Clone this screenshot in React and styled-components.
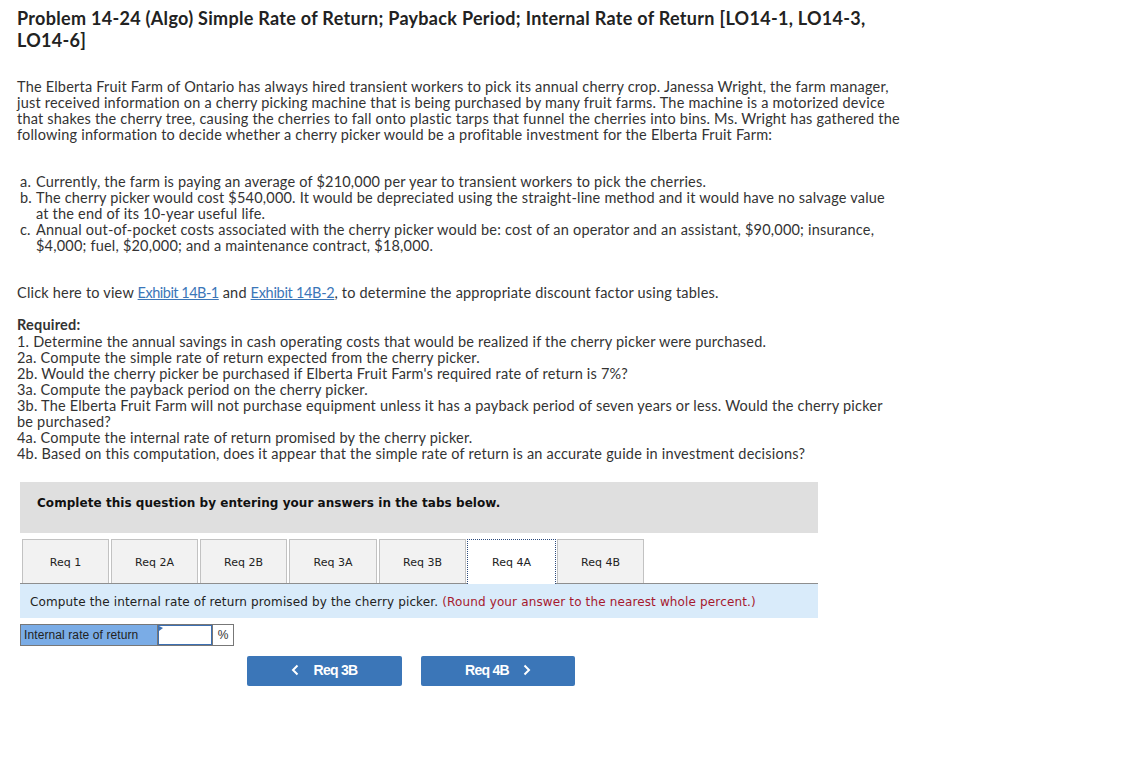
import React from "react";
import styled, { createGlobalStyle } from "styled-components";

const Global = createGlobalStyle`
	html, body {
		margin: 0;
		padding: 0;
		background: #ffffff;
	}
`;

const Page = styled.div`
	width: 1122px;
	height: 769px;
	overflow: hidden;
	box-sizing: border-box;
	padding: 7px 0 0 17px;
	font-family: "Lato", "Liberation Sans", sans-serif;
	font-size: 14.5px;
	letter-spacing: 0.2px;
	line-height: 16px;
	color: #333333;
	white-space: nowrap;
`;

const Title = styled.h1`
	margin: 0 0 28px;
	font-size: 18px;
	letter-spacing: 0.3px;
	line-height: 22px;
	font-weight: 700;
	color: #222222;
`;

const Para = styled.p`
	margin: 0 0 31px;
`;

const Parts = styled.ol`
	list-style: none;
	margin: 0 0 31px 3px;
	padding: 0;
`;

const Part = styled.li`
	position: relative;
	padding-left: 16px;
`;

const Marker = styled.span`
	position: absolute;
	left: 0;
`;

const Exhibit = styled.a`
	color: #3b76b8;
	letter-spacing: ${(p) => p.$spacing}px;
	text-decoration: underline;
`;

const ReqTitle = styled.div`
	font-weight: 700;
	margin: 16px 0 1px;
`;

const Question = styled.section`
	margin: 20px 0 0 3px;
	width: 798px;
	font-family: "DejaVu Sans", Verdana, sans-serif;
	letter-spacing: 0;
`;

const Banner = styled.div`
	height: 51px;
	box-sizing: border-box;
	padding: 13px 17px;
	background: #dfdfdf;
	font-size: 12px;
	letter-spacing: 0.05px;
	font-weight: 700;
	color: #111111;
`;

const Tabs = styled.div`
	display: flex;
	gap: 2px;
	margin-top: 6px;
	padding-left: 2px;
	border-bottom: 1px solid #8e8e8e;
`;

const Tab = styled.button`
	width: ${(p) => p.$w}px;
	height: 44px;
	box-sizing: border-box;
	padding: 2px 0 0;
	border: 1px solid #c2c2c2;
	border-bottom: none;
	background: #f2f2f2;
	font-family: inherit;
	font-size: 11px;
	color: #222222;
	${(p) =>
		p.$active &&
		"margin: 0 -1px -1px; height: 45px; padding: 0 0 0; background: #ffffff; border: 1px dotted #2c4a7c; border-bottom: none;"}
`;

const Instruction = styled.div`
	height: 34px;
	box-sizing: border-box;
	padding: 10px 10px;
	background: #d9ebfa;
	font-size: 12px;
	letter-spacing: 0.14px;
	color: #222222;
`;

const Note = styled.span`
	color: #a6192e;
`;

const AnswerRow = styled.div`
	display: flex;
	width: 214px;
	height: 22px;
	margin-top: 6px;
	box-sizing: border-box;
	border: 1px solid #777777;
	font-family: "Liberation Sans", Arial, sans-serif;
	font-size: 12px;
	line-height: 20px;
`;

const AnswerLabel = styled.div`
	width: 137px;
	padding-left: 3px;
	box-sizing: border-box;
	border-right: 1px solid #777777;
	background: #7aace6;
	color: #222222;
	letter-spacing: 0.1px;
`;

const AnswerInput = styled.div`
	position: relative;
	width: 54px;
	box-sizing: border-box;
	border: 1px solid #3d70b2;
	background: #ffffff;
	&::before {
		content: "";
		position: absolute;
		left: 0;
		top: 0;
		border-left: 4px solid #3d70b2;
		border-top: 2px solid transparent;
		border-bottom: 3px solid transparent;
	}
`;

const Unit = styled.div`
	flex: 1;
	text-align: center;
	border-left: 1px solid #777777;
`;

const Nav = styled.div`
	display: flex;
	gap: 19px;
	margin: 10px 0 0 227px;
`;

const NavButton = styled.button`
	display: flex;
	align-items: center;
	justify-content: center;
	gap: 14px;
	width: ${(p) => p.$w}px;
	height: 30px;
	padding: 0 0 2px;
	border: none;
	border-radius: 2px;
	background: #3b76b8;
	color: #ffffff;
	font-family: "Liberation Sans", Arial, sans-serif;
	font-size: 14px;
	letter-spacing: -0.7px;
	font-weight: 700;
`;

const Chevron = ({ flip }) => (
	<svg width="8" height="12" viewBox="0 0 8 12" fill="none" stroke="#ffffff" strokeWidth="2">
		<path d={flip ? "M6.5 1.5 2 6l4.5 4.5" : "M1.5 1.5 6 6l-4.5 4.5"} />
	</svg>
);

const tabs = [
	["Req 1", 87],
	["Req 2A", 87],
	["Req 2B", 87],
	["Req 3A", 88],
	["Req 3B", 87],
	["Req 4A", 89],
	["Req 4B", 87]
];

export default function App() {
	return (
		<Page>
			<Global />
			<Title>
				Problem 14-24 (Algo) Simple Rate of Return; Payback Period; Internal Rate of Return [LO14-1, LO14-3,
				<br />
				LO14-6]
			</Title>
			<Para>
				The Elberta Fruit Farm of Ontario has always hired transient workers to pick its annual cherry crop. Janessa Wright, the farm manager,
				<br />
				just received information on a cherry picking machine that is being purchased by many fruit farms. The machine is a motorized device
				<br />
				that shakes the cherry tree, causing the cherries to fall onto plastic tarps that funnel the cherries into bins. Ms. Wright has gathered the
				<br />
				following information to decide whether a cherry picker would be a profitable investment for the Elberta Fruit Farm:
			</Para>
			<Parts>
				<Part>
					<Marker>a.</Marker>
					Currently, the farm is paying an average of $210,000 per year to transient workers to pick the cherries.
				</Part>
				<Part>
					<Marker>b.</Marker>
					The cherry picker would cost $540,000. It would be depreciated using the straight-line method and it would have no salvage value
					<br />
					at the end of its 10-year useful life.
				</Part>
				<Part>
					<Marker>c.</Marker>
					Annual out-of-pocket costs associated with the cherry picker would be: cost of an operator and an assistant, $90,000; insurance,
					<br />
					$4,000; fuel, $20,000; and a maintenance contract, $18,000.
				</Part>
			</Parts>
			<div>
				Click here to view <Exhibit $spacing={-0.5}>Exhibit 14B-1</Exhibit> and <Exhibit $spacing={-0.3}>Exhibit 14B-2</Exhibit>, to determine the appropriate discount factor using tables.
			</div>
			<ReqTitle>Required:</ReqTitle>
			<div>
				1. Determine the annual savings in cash operating costs that would be realized if the cherry picker were purchased.
				<br />
				2a. Compute the simple rate of return expected from the cherry picker.
				<br />
				2b. Would the cherry picker be purchased if Elberta Fruit Farm's required rate of return is 7%?
				<br />
				3a. Compute the payback period on the cherry picker.
				<br />
				3b. The Elberta Fruit Farm will not purchase equipment unless it has a payback period of seven years or less. Would the cherry picker
				<br />
				be purchased?
				<br />
				4a. Compute the internal rate of return promised by the cherry picker.
				<br />
				4b. Based on this computation, does it appear that the simple rate of return is an accurate guide in investment decisions?
			</div>
			<Question>
				<Banner>Complete this question by entering your answers in the tabs below.</Banner>
				<Tabs>
					{tabs.map(([name, w]) => (
						<Tab key={name} $w={w} $active={name === "Req 4A"}>
							{name}
						</Tab>
					))}
				</Tabs>
				<Instruction>
					Compute the internal rate of return promised by the cherry picker. <Note>(Round your answer to the nearest whole percent.)</Note>
				</Instruction>
				<AnswerRow>
					<AnswerLabel>Internal rate of return</AnswerLabel>
					<AnswerInput />
					<Unit>%</Unit>
				</AnswerRow>
				<Nav>
					<NavButton $w={155}>
						<Chevron flip />
						Req 3B
					</NavButton>
					<NavButton $w={154}>
						Req 4B
						<Chevron />
					</NavButton>
				</Nav>
			</Question>
		</Page>
	);
}
